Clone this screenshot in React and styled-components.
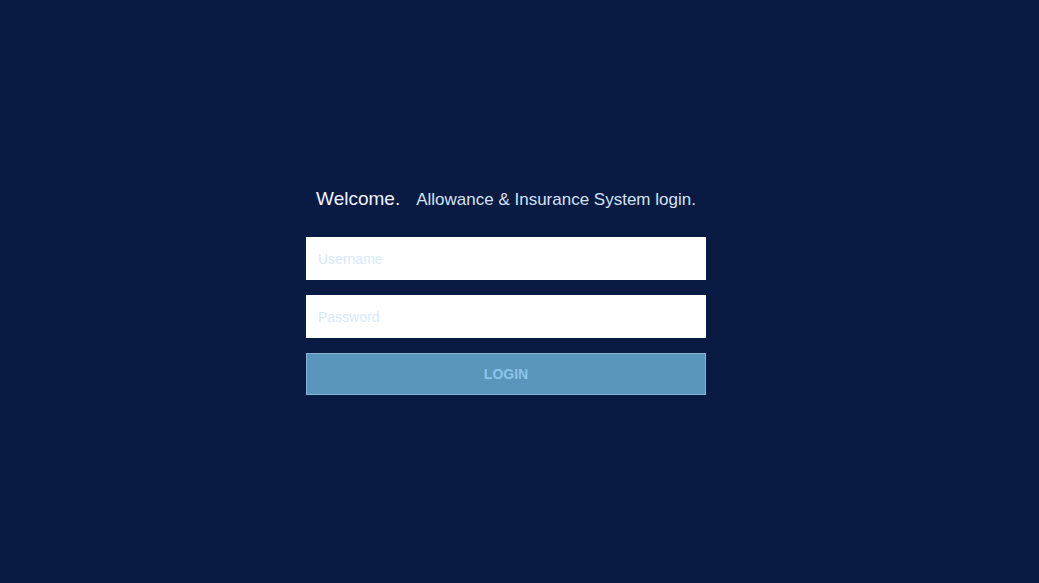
import React from 'react';
import styled, { createGlobalStyle } from 'styled-components';

const GlobalStyle = createGlobalStyle`
    html, body {
        margin: 0;
        padding: 0;
        background-color: #091a43;
        font-family: "Liberation Sans", Arial, sans-serif;
    }
    * {
        box-sizing: border-box;
    }
`;

const Page = styled.div`
    min-height: 100vh;
    display: flex;
    align-items: center;
    justify-content: center;
    padding: 0 27px 2px 0;
`;

const LoginForm = styled.form`
    width: 400px;
    display: flex;
    flex-direction: column;
`;

const Heading = styled.div`
    display: flex;
    justify-content: center;
    align-items: baseline;
    gap: 16px;
    height: 25px;
    padding-top: 1px;
    line-height: 24px;
    margin-bottom: 26px;
`;

const Welcome = styled.span`
    font-size: 19px;
    color: #eef3ff;
`;

const Subtitle = styled.span`
    font-size: 17px;
    color: #d3e2f6;
`;

const TextInput = styled.input`
    width: 100%;
    height: 43px;
    border: none;
    outline: none;
    padding: 0 12px;
    margin-bottom: 15px;
    background-color: #fff;
    font-family: inherit;
    font-size: 14px;
    color: #2a4a70;

    &::placeholder {
        color: #d8eafa;
    }
`;

const LoginButton = styled.button`
    width: 100%;
    height: 42px;
    border: 1px solid #80b4d9;
    background-color: #5a95bb;
    color: #8cc4ea;
    font-family: inherit;
    font-size: 14px;
    font-weight: bold;
    cursor: pointer;
`;

export default function App() {
    return (
        <>
            <GlobalStyle />
            <Page>
                <LoginForm onSubmit={(e) => e.preventDefault()}>
                    <Heading>
                        <Welcome>Welcome.</Welcome>
                        <Subtitle>Allowance &amp; Insurance System login.</Subtitle>
                    </Heading>
                    <TextInput type="text" placeholder="Username" />
                    <TextInput type="password" placeholder="Password" />
                    <LoginButton type="submit">LOGIN</LoginButton>
                </LoginForm>
            </Page>
        </>
    );
}
